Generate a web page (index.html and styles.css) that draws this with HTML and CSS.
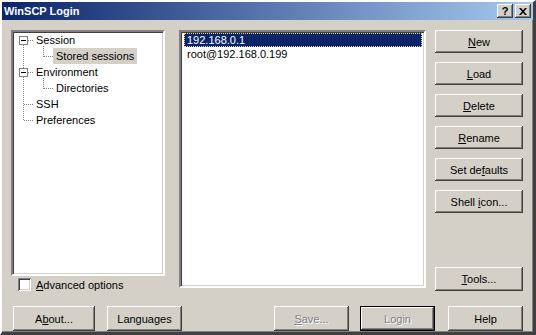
FILE: index.html
```html
<!DOCTYPE html>
<html lang="en">
<head>
    <meta charset="UTF-8">
    <title>WinSCP Login</title>
    <link rel="stylesheet" href="styles.css">
</head>
<body>
    <div class="window">
        <!-- タイトルバー -->
        <div class="titlebar">
            <span class="title">WinSCP Login</span>
            <div class="caption-buttons">
                <span class="cap-btn cap-help">?</span>
                <span class="cap-btn cap-close">
                    <svg width="8" height="7" viewBox="0 0 8 7"><path d="M0 0h2l2 2.2L6 0h2L5 3.5 8 7H6L4 4.8 2 7H0l3-3.5z" fill="#000"/></svg>
                </span>
            </div>
        </div>

        <div class="main">
            <div class="left">
                <!-- ツリー -->
                <div class="tree sunken">
                    <svg class="tree-lines" width="150" height="100" viewBox="0 0 150 100" shape-rendering="crispEdges">
                        <g stroke="#808080" stroke-dasharray="1 1" fill="none">
                            <line x1="10.5" y1="13" x2="10.5" y2="36"/>
                            <line x1="10.5" y1="45" x2="10.5" y2="89"/>
                            <line x1="15" y1="8.5" x2="21" y2="8.5"/>
                            <line x1="15" y1="40.5" x2="21" y2="40.5"/>
                            <line x1="11" y1="72.5" x2="21" y2="72.5"/>
                            <line x1="11" y1="88.5" x2="21" y2="88.5"/>
                            <line x1="30.5" y1="14" x2="30.5" y2="25"/>
                            <line x1="31" y1="24.5" x2="40" y2="24.5"/>
                            <line x1="30.5" y1="46" x2="30.5" y2="57"/>
                            <line x1="31" y1="56.5" x2="40" y2="56.5"/>
                        </g>
                        <rect x="6.5" y="4.5" width="8" height="8" fill="#fff" stroke="#808080"/>
                        <rect x="6.5" y="36.5" width="8" height="8" fill="#fff" stroke="#808080"/>
                        <line x1="8" y1="8.5" x2="13" y2="8.5" stroke="#000"/>
                        <line x1="8" y1="40.5" x2="13" y2="40.5" stroke="#000"/>
                    </svg>
                    <ul class="tree-list">
                        <li class="node"><span class="label">Session</span></li>
                        <li class="node child"><span class="label selected">Stored sessions</span></li>
                        <li class="node"><span class="label">Environment</span></li>
                        <li class="node child"><span class="label">Directories</span></li>
                        <li class="node"><span class="label">SSH</span></li>
                        <li class="node"><span class="label">Preferences</span></li>
                    </ul>
                </div>
                <div class="check">
                    <span class="checkbox"></span>
                    <span><u>A</u>dvanced options</span>
                </div>
            </div>

            <!-- 保存済みセッション -->
            <div class="sessions sunken">
                <div class="session selected">192.168.0.1</div>
                <div class="session">root@192.168.0.199</div>
            </div>

            <div class="actions">
                <button class="btn"><u>N</u>ew</button>
                <button class="btn"><u>L</u>oad</button>
                <button class="btn"><u>D</u>elete</button>
                <button class="btn"><u>R</u>ename</button>
                <button class="btn">Set de<u>f</u>aults</button>
                <button class="btn">Shell <u>i</u>con...</button>
                <button class="btn tools"><u>T</u>ools...</button>
            </div>
        </div>

        <!-- 下部ボタン -->
        <div class="footer">
            <button class="btn wide">A<u>b</u>out...</button>
            <button class="btn">Languages</button>
            <button class="btn disabled push"><u>S</u>ave...</button>
            <button class="btn disabled default">Login</button>
            <button class="btn">Help</button>
        </div>
    </div>
</body>
</html>
```

FILE: styles.css
```css
body, html {
    margin: 0;
    padding: 0;
    background-color: #d4d0c8;
    font-family: 'Liberation Sans', Arial, sans-serif;
    font-size: 11px;
    color: #000;
}

/* ウィンドウ枠 */
.window {
    width: 536px;
    height: 335px;
    box-sizing: border-box;
    background-color: #d4d0c8;
    border-style: solid;
    border-width: 2px 3px 3px 2px;
    border-color: #fff #404040 #404040 #fff;
    box-shadow: inset -1px -1px #808080;
    display: flex;
    flex-direction: column;
}

/* タイトルバー */
.titlebar {
    height: 18px;
    display: flex;
    align-items: center;
    justify-content: space-between;
    padding: 0 2px;
    background: linear-gradient(to right, #0a246a, #a6caf0);
}

.title {
    color: #fff;
    font-weight: bold;
    font-size: 11px;
    line-height: 18px;
}

.caption-buttons {
    display: flex;
    gap: 2px;
}

.cap-btn {
    width: 16px;
    height: 14px;
    box-sizing: border-box;
    background-color: #d4d0c8;
    box-shadow: inset -1px -1px #404040, inset 1px 1px #fff, inset -2px -2px #808080;
    display: flex;
    align-items: center;
    justify-content: center;
    font-weight: bold;
    font-size: 11px;
    line-height: 14px;
}

.cap-help {
    padding-bottom: 1px;
}

/* メイン部分 */
.main {
    display: grid;
    grid-template-columns: 168px 256px 88px;
    padding: 10px 10px 0 9px;
}

.left {
    padding-right: 14px;
}

.sunken {
    box-sizing: border-box;
    background-color: #fff;
    border: 2px solid;
    border-color: #808080 #fff #fff #808080;
    box-shadow: inset 1px 1px #404040, inset -1px -1px #d4d0c8;
}

/* ツリー */
.tree {
    position: relative;
    height: 246px;
}

.tree-lines {
    position: absolute;
    top: 0;
    left: 0;
}

.tree-list {
    list-style: none;
    margin: 0;
    padding: 0;
}

.node {
    height: 16px;
    line-height: 16px;
    padding-left: 20px;
}

.node.child {
    padding-left: 40px;
}

.label {
    display: inline-block;
    padding: 0 3px;
    position: relative;
}

.label.selected {
    background-color: #d4d0c8;
}

.check {
    display: flex;
    align-items: center;
    gap: 5px;
    margin-top: 2px;
    padding-left: 7px;
    height: 13px;
}

.checkbox {
    width: 13px;
    height: 13px;
    box-sizing: border-box;
    background-color: #fff;
    box-shadow: inset 1px 1px #808080, inset -1px -1px #fff, inset 2px 2px #404040, inset -2px -2px #d4d0c8;
}

/* セッション一覧 */
.sessions {
    height: 258px;
    margin-right: 9px;
    padding: 1px 2px 0 3px;
}

.session {
    height: 13px;
    line-height: 13px;
    padding-left: 2px;
    border: 1px solid transparent;
    border-bottom: none;
}

.session.selected {
    height: 12px;
    background-color: #0a246a;
    color: #fff;
    border: 1px dotted #e8d890;
    line-height: 12px;
}

/* ボタン */
.btn {
    font-family: 'Liberation Sans', Arial, sans-serif;
    font-size: 11px;
    color: #000;
    background-color: #d4d0c8;
    border: none;
    margin: 0;
    padding: 0;
    box-shadow: inset -1px -1px #404040, inset 1px 1px #fff, inset -2px -2px #808080;
    height: 23px;
    width: 88px;
}

.actions {
    display: flex;
    flex-direction: column;
    gap: 9px;
}

.actions .tools {
    margin-top: auto;
    height: 24px;
}

.footer {
    display: flex;
    gap: 12px;
    padding: 15px 10px 0 11px;
}

.footer .btn {
    width: 75px;
    height: 25px;
}

.footer .btn.wide {
    width: 82px;
}

.footer .push {
    margin-left: auto;
    margin-right: -1px;
}

.btn.disabled {
    color: #808080;
    text-shadow: 1px 1px #fff;
}

.btn.default {
    border: 1px solid #000;
    margin-right: 1px;
}
```
